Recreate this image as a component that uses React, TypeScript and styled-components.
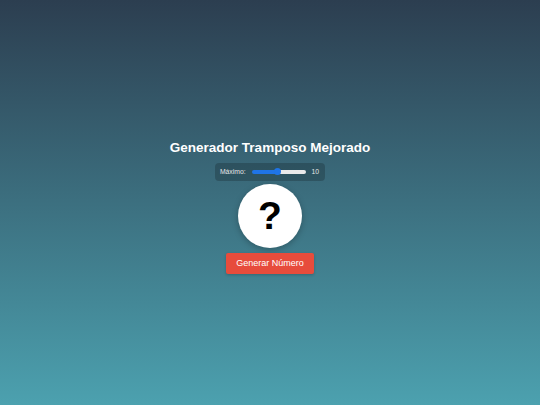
import React, { useState } from "react";
import styled, { createGlobalStyle } from "styled-components";

const GlobalStyle = createGlobalStyle`
  html, body {
    margin: 0;
    padding: 0;
  }
  body {
    font-family: "Liberation Sans", Arial, sans-serif;
  }
`;

const Page = styled.main`
  min-height: 100vh;
  box-sizing: border-box;
  padding-top: 140px;
  display: flex;
  flex-direction: column;
  align-items: center;
  background: linear-gradient(to bottom, #2c3e50, #4ca1af);
`;

const Title = styled.h1`
  margin: 0 0 7.5px;
  font-size: 13.5px;
  font-weight: bold;
  color: #ffffff;
  line-height: normal;
`;

const Controls = styled.div`
  display: flex;
  align-items: center;
  gap: 6px;
  height: 18px;
  padding: 0 6px 0 5px;
  box-sizing: border-box;
  border-radius: 4px;
  background: rgba(0, 0, 0, 0.2);
  color: #e6e6e6;
  font-size: 6.8px;
`;

const Label = styled.label``;

const Range = styled.input<{ $pct: number }>`
  -webkit-appearance: none;
  appearance: none;
  width: 54px;
  height: 4px;
  margin: 0;
  border-radius: 2px;
  background: linear-gradient(
    to right,
    #1f74e6 ${(p) => p.$pct}%,
    #e9e9e9 ${(p) => p.$pct}%
  );
  outline: none;

  &::-webkit-slider-thumb {
    -webkit-appearance: none;
    width: 7px;
    height: 7px;
    border-radius: 50%;
    background: #1f74e6;
    border: none;
  }
`;

const Value = styled.span`
  min-width: 7px;
`;

const Circle = styled.div`
  margin-top: 3px;
  width: 64px;
  height: 64px;
  border-radius: 50%;
  background: #ffffff;
  box-shadow: 0 2px 6px rgba(0, 0, 0, 0.25);
  display: flex;
  align-items: center;
  justify-content: center;
  font-size: 39px;
  font-weight: bold;
  color: #000000;
`;

const GenerateButton = styled.button`
  margin-top: 5px;
  width: 88px;
  height: 21px;
  border: none;
  border-radius: 2px;
  background: #e74c3c;
  color: #ffffff;
  font-family: "Liberation Sans", Arial, sans-serif;
  font-size: 9px;
  box-shadow: 0 1px 3px rgba(0, 0, 0, 0.2);
  cursor: pointer;
`;

const App = () => {
  const [max, setMax] = useState(10);
  const [result, setResult] = useState<string>("?");
  const min = 1;
  const top = 20;
  const pct = ((max - min) / (top - min)) * 100;

  const generate = () => {
    setResult(String(Math.floor(Math.random() * max) + 1));
  };

  return (
    <>
      <GlobalStyle />
      <Page>
        <Title>Generador Tramposo Mejorado</Title>
        <Controls>
          <Label htmlFor="max">Máximo:</Label>
          <Range
            id="max"
            type="range"
            min={min}
            max={top}
            value={max}
            $pct={pct}
            onChange={(e) => setMax(Number(e.target.value))}
          />
          <Value>{max}</Value>
        </Controls>
        <Circle>{result}</Circle>
        <GenerateButton onClick={generate}>Generar Número</GenerateButton>
      </Page>
    </>
  );
};

export default App;
